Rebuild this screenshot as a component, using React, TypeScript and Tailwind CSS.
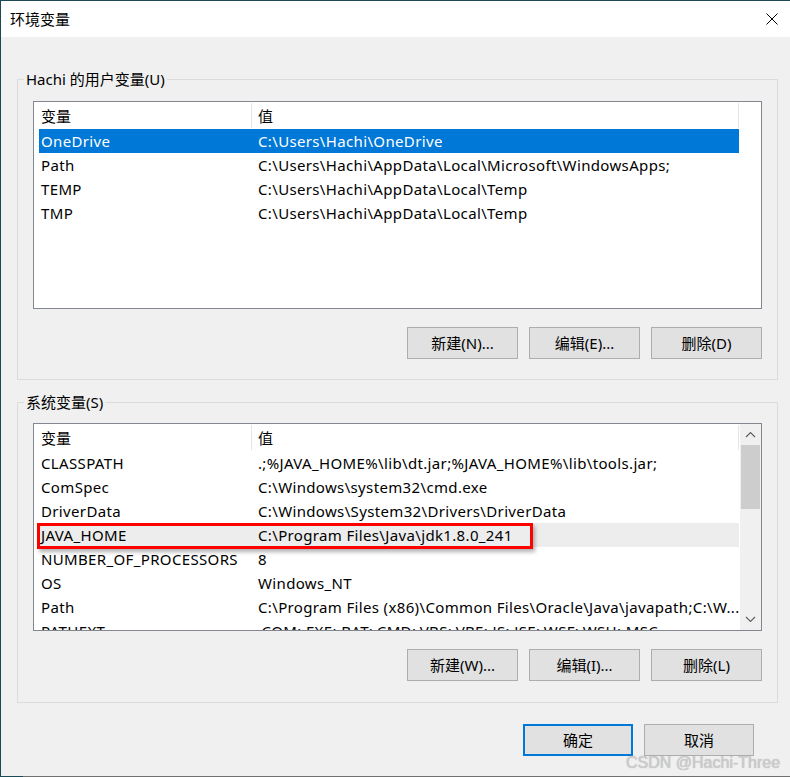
import React from 'react';

type Row = { name: string; value: string; selected?: boolean; hot?: boolean };

const userRows: Row[] = [
  { name: 'OneDrive', value: 'C:\\Users\\Hachi\\OneDrive', selected: true },
  { name: 'Path', value: 'C:\\Users\\Hachi\\AppData\\Local\\Microsoft\\WindowsApps;' },
  { name: 'TEMP', value: 'C:\\Users\\Hachi\\AppData\\Local\\Temp' },
  { name: 'TMP', value: 'C:\\Users\\Hachi\\AppData\\Local\\Temp' },
];

const systemRows: Row[] = [
  { name: 'CLASSPATH', value: '.;%JAVA_HOME%\\lib\\dt.jar;%JAVA_HOME%\\lib\\tools.jar;' },
  { name: 'ComSpec', value: 'C:\\Windows\\system32\\cmd.exe' },
  { name: 'DriverData', value: 'C:\\Windows\\System32\\Drivers\\DriverData' },
  { name: 'JAVA_HOME', value: 'C:\\Program Files\\Java\\jdk1.8.0_241', hot: true },
  { name: 'NUMBER_OF_PROCESSORS', value: '8' },
  { name: 'OS', value: 'Windows_NT' },
  { name: 'Path', value: 'C:\\Program Files (x86)\\Common Files\\Oracle\\Java\\javapath;C:\\W...' },
  { name: 'PATHEXT', value: '.COM;.EXE;.BAT;.CMD;.VBS;.VBE;.JS;.JSE;.WSF;.WSH;.MSC' },
];

function Chevron({ up }: { up?: boolean }) {
  return (
    <svg width="11" height="7" viewBox="0 0 11 7">
      <polyline
        points={up ? '1,6 5.5,1.5 10,6' : '1,1 5.5,5.5 10,1'}
        fill="none"
        stroke="#606060"
        strokeWidth="1.2"
      />
    </svg>
  );
}

function ListView({ rows, scroll, children }: { rows: Row[]; scroll?: boolean; children?: React.ReactNode }) {
  return (
    <div className="relative flex h-[208px] w-[729px] overflow-hidden border border-[#828790] bg-white">
      <div className="w-[706px] shrink-0">
        {/* 表头 */}
        <div className="flex h-[27px] items-center">
          <div className="ml-[5px] flex h-[25px] w-[213px] items-center border-r border-[#e5e5e5] pl-[2px]">变量</div>
          <div className="flex h-[25px] w-[487px] items-center border-r border-[#e5e5e5] pl-[6px]">值</div>
        </div>
        {rows.map((r, i) => (
          <div
            key={i}
            className={
              'ml-[5px] flex h-[24px] w-[700px] items-center whitespace-nowrap leading-[20px] tracking-[0.35px] ' +
              (r.selected ? 'bg-[#0078d7] text-white' : r.hot ? 'bg-[#ededed]' : '')
            }
          >
            <div className="w-[213px] shrink-0 overflow-hidden pl-[2px]">{r.name}</div>
            <div className="w-[487px] shrink-0 overflow-hidden pl-[6px]">{r.value}</div>
          </div>
        ))}
      </div>
      {scroll ? (
        <div className="flex w-[21px] flex-col bg-[#f0f0f0]">
          <div className="flex h-[21px] items-center justify-center">
            <Chevron up />
          </div>
          <div className="flex-1">
            <div className="mx-[1px] h-[64px] bg-[#cdcdcd]" />
          </div>
          <div className="flex h-[21px] items-center justify-center">
            <Chevron />
          </div>
        </div>
      ) : (
        <div className="w-[21px]" />
      )}
      {children}
    </div>
  );
}

function Button({ label, primary, w = 'w-[111px]' }: { label: string; primary?: boolean; w?: string }) {
  return (
    <div
      className={
        'flex h-[32px] items-center justify-center bg-[#e1e1e1] ' +
        w +
        ' ' +
        (primary ? 'border-2 border-[#0078d7]' : 'border border-[#adadad]')
      }
    >
      {label}
    </div>
  );
}

export default function App() {
  return (
    <div className="relative flex h-[777px] w-[790px] flex-col overflow-hidden border-l border-t border-[#1b4a55] bg-[#f0f0f0] font-['Noto_Sans','Noto_Sans_CJK_SC',sans-serif] text-[15px] leading-[20px] text-black">
      {/* 标题栏 */}
      <div className="flex h-[36px] shrink-0 items-center justify-between bg-white pl-[9px] pr-[12px]">
        <span>环境变量</span>
        <svg width="12" height="12" viewBox="0 0 12 12">
          <path d="M0.5 0.5 L11.5 11.5 M11.5 0.5 L0.5 11.5" stroke="#000" strokeWidth="1" />
        </svg>
      </div>

      {/* 用户变量 */}
      <fieldset className="ml-[16px] mt-[32px] w-[761px] border border-[#dcdcdc] pb-[20px]">
        <legend className="ml-[6px] px-[2px] leading-[20px]">Hachi 的用户变量(U)</legend>
        <div className="pl-[15px] pr-[15px] pt-[12px]">
          <ListView rows={userRows} />
          <div className="mt-[18px] flex justify-end gap-[11px]">
            <Button label="新建(N)..." />
            <Button label="编辑(E)..." />
            <Button label="删除(D)" />
          </div>
        </div>
      </fieldset>

      {/* 系统变量 */}
      <fieldset className="ml-[16px] mt-[12px] w-[761px] border border-[#dcdcdc] pb-[21px]">
        <legend className="ml-[6px] px-[2px] leading-[20px]">系统变量(S)</legend>
        <div className="pl-[15px] pr-[15px] pt-[11px]">
          <ListView rows={systemRows} scroll>
            <div className="pointer-events-none absolute left-[3px] top-[99px] h-[26px] w-[496px] border-[3px] border-[#ff0000] shadow-[2px_3px_4px_rgba(0,0,0,0.3)]" />
          </ListView>
          <div className="mt-[18px] flex justify-end gap-[11px]">
            <Button label="新建(W)..." />
            <Button label="编辑(I)..." />
            <Button label="删除(L)" />
          </div>
        </div>
      </fieldset>

      <div className="mt-[21px] flex justify-end gap-[11px] pr-[36px]">
        <Button label="确定" primary w="w-[110px]" />
        <Button label="取消" w="w-[110px]" />
      </div>

      {/* 水印 */}
      <div className="absolute left-[625px] top-[752px] font-['Liberation_Sans',sans-serif] text-[16px] text-[#cdcdcd] [text-shadow:0_0_1px_#a8a8a8]">
        CSDN @Hachi-Three
      </div>
      <div className="absolute bottom-0 left-0 right-0 flex h-[1px]">
        <div className="w-[22px] bg-[#1b4a55]" />
        <div className="flex-1 bg-[#707070]" />
      </div>
    </div>
  );
}
